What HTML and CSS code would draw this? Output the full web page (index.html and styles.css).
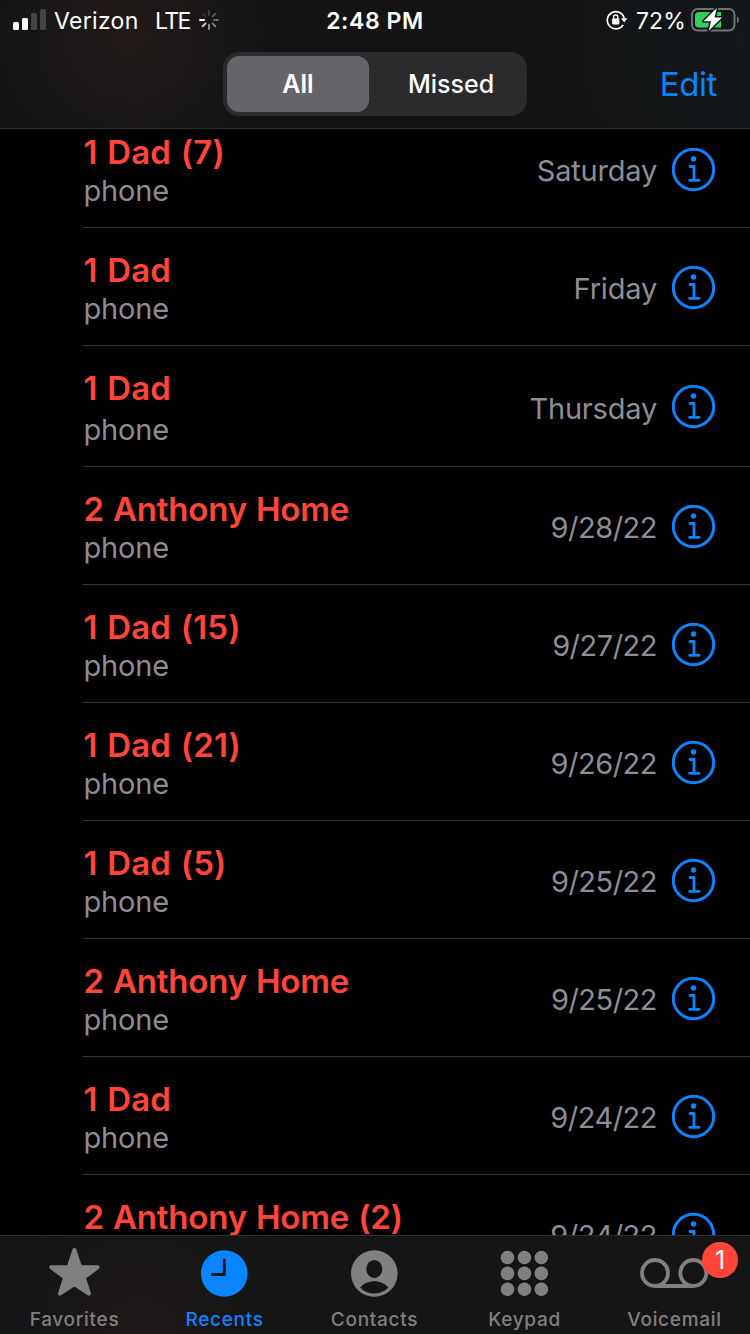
FILE: index.html
```
<!DOCTYPE html>
<html lang="en">
<head>
    <meta charset="UTF-8">
    <meta name="viewport" content="width=device-width, initial-scale=1.0">
    <title>Recents</title>
    <link rel="stylesheet" href="styles.css">
</head>
<body>
    <svg width="0" height="0" class="defs">
        <symbol id="info" viewBox="0 0 44 44">
            <circle cx="21.5" cy="21.5" r="20.2" fill="none" stroke="#0a84ff" stroke-width="3"/>
            <circle cx="21.5" cy="11" r="2.7" fill="#0a84ff"/>
            <path d="M18 18.5h4v13.8M17.600 32.300h9.500" fill="none" stroke="#0a84ff" stroke-width="2.8" stroke-linecap="round" stroke-linejoin="round"/>
        </symbol>
    </svg>
    <header class="header">
        <div class="status-bar">
            <div class="status-left">
                <svg class="signal" width="34" height="22" viewBox="0 0 34 22">
                    <rect x="0" y="13" width="6" height="8" rx="1.5" fill="#fff"/>
                    <rect x="9" y="9" width="6" height="12" rx="1.5" fill="#fff"/>
                    <rect x="18" y="4" width="6" height="17" rx="1.5" fill="#454445"/>
                    <rect x="27" y="0" width="6" height="21" rx="1.5" fill="#454445"/>
                </svg>
                <span class="carrier">Verizon</span>
                <span class="network">LTE</span>
                <svg class="spinner" width="20" height="20" viewBox="0 0 20 20" stroke-width="1.8" stroke-linecap="round">
                    <path d="M10 1v4" stroke="#474544"/>
                    <path d="M16.4 3.6l-2.9 2.9" stroke="#5a5858"/>
                    <path d="M19 10h-4" stroke="#6b6969"/>
                    <path d="M16.4 16.4l-2.9-2.9" stroke="#858383"/>
                    <path d="M10 19v-4" stroke="#a3a1a1"/>
                    <path d="M3.6 16.4l2.9-2.9" stroke="#d5d4d4"/>
                    <path d="M1 10h4" stroke="#fff"/>
                    <path d="M3.6 3.6l2.9 2.9" stroke="#353332"/>
                </svg>
            </div>
            <div class="time">2:48 PM</div>
            <div class="status-right">
                <svg class="lock" width="22" height="20" viewBox="0 0 22 20">
                    <path d="M17.2 14.8A8.6 8.6 0 1 1 18.2 8" fill="none" stroke="#fff" stroke-width="1.6"/>
                    <path d="M15 8.2h6.4l-3.2 4.3z" fill="#fff"/>
                    <rect x="6.1" y="8.6" width="7.2" height="5.8" rx=".8" fill="#fff"/>
                    <path d="M7.6 9V7.1a2.1 2.1 0 0 1 4.2 0V9" fill="none" stroke="#fff" stroke-width="1.3"/>
                </svg>
                <span class="percent">72%</span>
                <svg class="battery" width="48" height="26" viewBox="0 0 48 26">
                    <rect x="1" y="2" width="42.5" height="21.5" rx="5.5" fill="none" stroke="#727375" stroke-width="1.9"/>
                    <path d="M46 9.2c2.5 1.5 2.5 5.8 0 7.3z" fill="#727375"/>
                    <path d="M8 5h22v15.500H8a4 4 0 0 1-4-4V9a4 4 0 0 1 4-4z" fill="#30d158"/>
                    <path d="M25.800 1L12.500 14.200H20L17.800 23.800L31 10.400H23.600z" fill="#fff" stroke="#141618" stroke-width="3" stroke-linejoin="round" paint-order="stroke"/>
                </svg>
            </div>
        </div>
        <div class="nav">
            <div class="segmented">
                <div class="segment selected">All</div>
                <div class="segment">Missed</div>
            </div>
            <a class="edit">Edit</a>
        </div>
    </header>

    <main class="recents">
        <ul class="calls">
            <li class="call">
                <div class="caller"><div class="name">1 Dad (7)</div><div class="label">phone</div></div>
                <div class="date day">Saturday</div>
                <svg class="info"><use href="#info"/></svg>
            </li>
            <li class="call">
                <div class="caller"><div class="name">1 Dad</div><div class="label">phone</div></div>
                <div class="date day">Friday</div>
                <svg class="info"><use href="#info"/></svg>
            </li>
            <li class="call tall">
                <div class="caller"><div class="name">1 Dad</div><div class="label">phone</div></div>
                <div class="date day">Thursday</div>
                <svg class="info"><use href="#info"/></svg>
            </li>
            <li class="call">
                <div class="caller"><div class="name long">2 Anthony Home</div><div class="label">phone</div></div>
                <div class="date">9/28/22</div>
                <svg class="info"><use href="#info"/></svg>
            </li>
            <li class="call">
                <div class="caller"><div class="name">1 Dad (15)</div><div class="label">phone</div></div>
                <div class="date">9/27/22</div>
                <svg class="info"><use href="#info"/></svg>
            </li>
            <li class="call">
                <div class="caller"><div class="name">1 Dad (21)</div><div class="label">phone</div></div>
                <div class="date">9/26/22</div>
                <svg class="info"><use href="#info"/></svg>
            </li>
            <li class="call">
                <div class="caller"><div class="name">1 Dad (5)</div><div class="label">phone</div></div>
                <div class="date">9/25/22</div>
                <svg class="info"><use href="#info"/></svg>
            </li>
            <li class="call">
                <div class="caller"><div class="name long">2 Anthony Home</div><div class="label">phone</div></div>
                <div class="date">9/25/22</div>
                <svg class="info"><use href="#info"/></svg>
            </li>
            <li class="call">
                <div class="caller"><div class="name">1 Dad</div><div class="label">phone</div></div>
                <div class="date">9/24/22</div>
                <svg class="info"><use href="#info"/></svg>
            </li>
            <li class="call">
                <div class="caller"><div class="name long">2 Anthony Home (2)</div></div>
                <div class="date">9/24/22</div>
                <svg class="info"><use href="#info"/></svg>
            </li>
        </ul>
    </main>

    <nav class="tab-bar">
        <a class="tab">
            <svg width="54" height="54" viewBox="0 0 54 54" fill="#808080">
                <path d="M27.400 4L33 20.900L50.600 21.200L36.800 31.700L41.900 47.700L27.400 38L13 47.700L18.100 31.700L4.200 21.200L21.800 20.900z" stroke="#808080" stroke-width="4" stroke-linejoin="round"/>
            </svg>
            <span>Favorites</span>
        </a>
        <a class="tab active">
            <svg width="54" height="54" viewBox="0 0 54 54">
                <circle cx="27.300" cy="27.500" r="23.300" fill="#0a84ff"/>
                <path d="M27.300 14v14.500H15.500" fill="none" stroke="#161616" stroke-width="3" stroke-linecap="round" stroke-linejoin="round"/>
            </svg>
            <span>Recents</span>
        </a>
        <a class="tab">
            <svg width="54" height="54" viewBox="0 0 54 54">
                <circle cx="27.300" cy="27.500" r="23.300" fill="#808080"/>
                <ellipse cx="27.300" cy="22.900" rx="8" ry="9" fill="#151515"/>
                <path d="M13 41.500C20 33 34.500 33 41.500 41.500C33 49.500 21 49.500 13 41.500z" fill="#151515"/>
            </svg>
            <span>Contacts</span>
        </a>
        <a class="tab">
            <svg width="54" height="54" viewBox="0 0 54 54" fill="#808080">
                <circle cx="10.500" cy="11.500" r="6.800"/><circle cx="27.400" cy="11.500" r="6.800"/><circle cx="44.300" cy="11.500" r="6.800"/>
                <circle cx="10.500" cy="27.400" r="6.800"/><circle cx="27.400" cy="27.400" r="6.800"/><circle cx="44.300" cy="27.400" r="6.800"/>
                <circle cx="10.500" cy="43.300" r="6.800"/><circle cx="27.400" cy="43.300" r="6.800"/><circle cx="44.300" cy="43.300" r="6.800"/>
            </svg>
            <span>Keypad</span>
        </a>
        <a class="tab">
            <svg width="72" height="54" viewBox="0 0 72 54" fill="none" stroke="#808080" stroke-width="3.800">
                <circle cx="17" cy="27" r="13"/>
                <circle cx="55.300" cy="27" r="13"/>
                <path d="M17 40h38.300"/>
            </svg>
            <span>Voicemail</span>
            <span class="badge">1</span>
        </a>
    </nav>
</body>
</html>
```
FILE: styles.css
```
* {
    box-sizing: border-box;
}
body {
    font-family: Inter, "Liberation Sans", sans-serif;
    background-color: #000;
    color: #fff;
    margin: 0;
    width: 750px;
    height: 1334px;
    display: flex;
    flex-direction: column;
    overflow: hidden;
}
svg {
    display: block;
    flex: none;
}
.defs {
    position: absolute;
}
.header {
    height: 129px;
    flex: none;
    border-bottom: 1px solid #2d2d2d;
    background: radial-gradient(circle at 130px 35px, #211a19 0, rgba(20,20,20,0) 140px),
        radial-gradient(circle at 740px 40px, #12181b 0, rgba(20,20,20,0) 180px), #141414;
}
.status-bar {
    height: 40px;
    display: grid;
    grid-template-columns: 1fr auto 1fr;
    align-items: center;
    font-size: 23px;
    line-height: 40px;
}
.status-bar span, .time {
    padding-top: 2px;
    line-height: 38px;
}
.status-left, .status-right {
    display: flex;
    align-items: center;
}
.status-left {
    padding-left: 13px;
}
.signal {
    margin-right: 7px;
}
.carrier {
    width: 101px;
    letter-spacing: 0.3px;
}
.network {
    width: 44px;
    letter-spacing: -1.6px;
}
.time {
    font-weight: 600;
    font-size: 23px;
    letter-spacing: 0.6px;
}
.status-right {
    justify-content: flex-end;
    padding-right: 11px;
}
.lock {
    margin-right: 8px;
}
.percent {
    width: 55px;
    letter-spacing: 0.1px;
}
.nav {
    height: 88px;
    display: grid;
    grid-template-columns: 1fr 304px 1fr;
    align-items: center;
}
.segmented {
    grid-column: 2;
    height: 64px;
    padding: 4px;
    display: flex;
    background-color: #2b2b2e;
    border-radius: 16px;
}
.segment {
    flex: 1;
    font-size: 25px;
    font-weight: 500;
    line-height: 57px;
    text-align: center;
    padding-left: 10px;
}
.segment.selected {
    flex: none;
    width: 142px;
    padding-left: 0;
    font-weight: 600;
    background-color: #656469;
    border-radius: 12px;
}
.edit {
    color: #0a84ff;
    font-size: 33px;
    letter-spacing: -0.4px;
    justify-self: end;
    margin-right: 33px;
}
.recents {
    flex: 1;
    min-height: 0;
    overflow: hidden;
}
/* list is scrolled a little, so the first row starts under the header */
.calls {
    list-style: none;
    margin: -19px 0 0;
    padding: 0 0 0 83px;
}
.call {
    height: 118px;
    display: flex;
    align-items: flex-start;
    padding-right: 34px;
    border-bottom: 1px solid #343436;
}
.caller {
    flex: 1;
    padding: 22px 0 0 0.5px;
}
.name {
    color: #ff453a;
    font-size: 33px;
    font-weight: 600;
    line-height: 40px;
    word-spacing: 1px;
    letter-spacing: 0.2px;
}
.name.long {
    word-spacing: 1px;
    letter-spacing: -0.2px;
}
.label {
    color: #8d8d93;
    font-size: 29px;
    line-height: 37px;
    letter-spacing: -0.2px;
}
.date {
    color: #8d8d93;
    font-size: 29px;
    line-height: 37px;
    letter-spacing: -0.5px;
    margin-top: 42px;
}
.date.day {
    letter-spacing: -0.2px;
}
.info {
    width: 44px;
    height: 44px;
    margin: 38px 0 0 15px;
}
.call.tall {
    height: 121px;
}
.tall .label {
    margin-top: 3px;
}
.tall .date {
    margin-top: 44px;
}
.tall .info {
    margin-top: 39px;
}
.tab-bar {
    height: 99px;
    flex: none;
    display: flex;
    border-top: 1px solid #2d2d2d;
    background: radial-gradient(circle at 140px 99px, #1e1818 0, rgba(20,20,20,0) 140px), #151515;
}
.tab {
    width: 150px;
    display: flex;
    flex-direction: column;
    align-items: center;
    position: relative;
    padding-top: 10px;
    padding-right: 2px;
    color: #808080;
    font-size: 19px;
    font-weight: 500;
    line-height: 40px;
    letter-spacing: 0.7px;
}
.tab span {
    padding-left: 1px;
}
.tab.active {
    color: #0a84ff;
}
.tab .badge {
    position: absolute;
    top: 6px;
    right: 12px;
    width: 36px;
    height: 36px;
    padding: 0;
    border-radius: 50%;
    background-color: #ff453a;
    color: #fff;
    font-size: 25px;
    font-weight: 400;
    line-height: 36px;
    text-align: center;
    letter-spacing: 0;
}
```
